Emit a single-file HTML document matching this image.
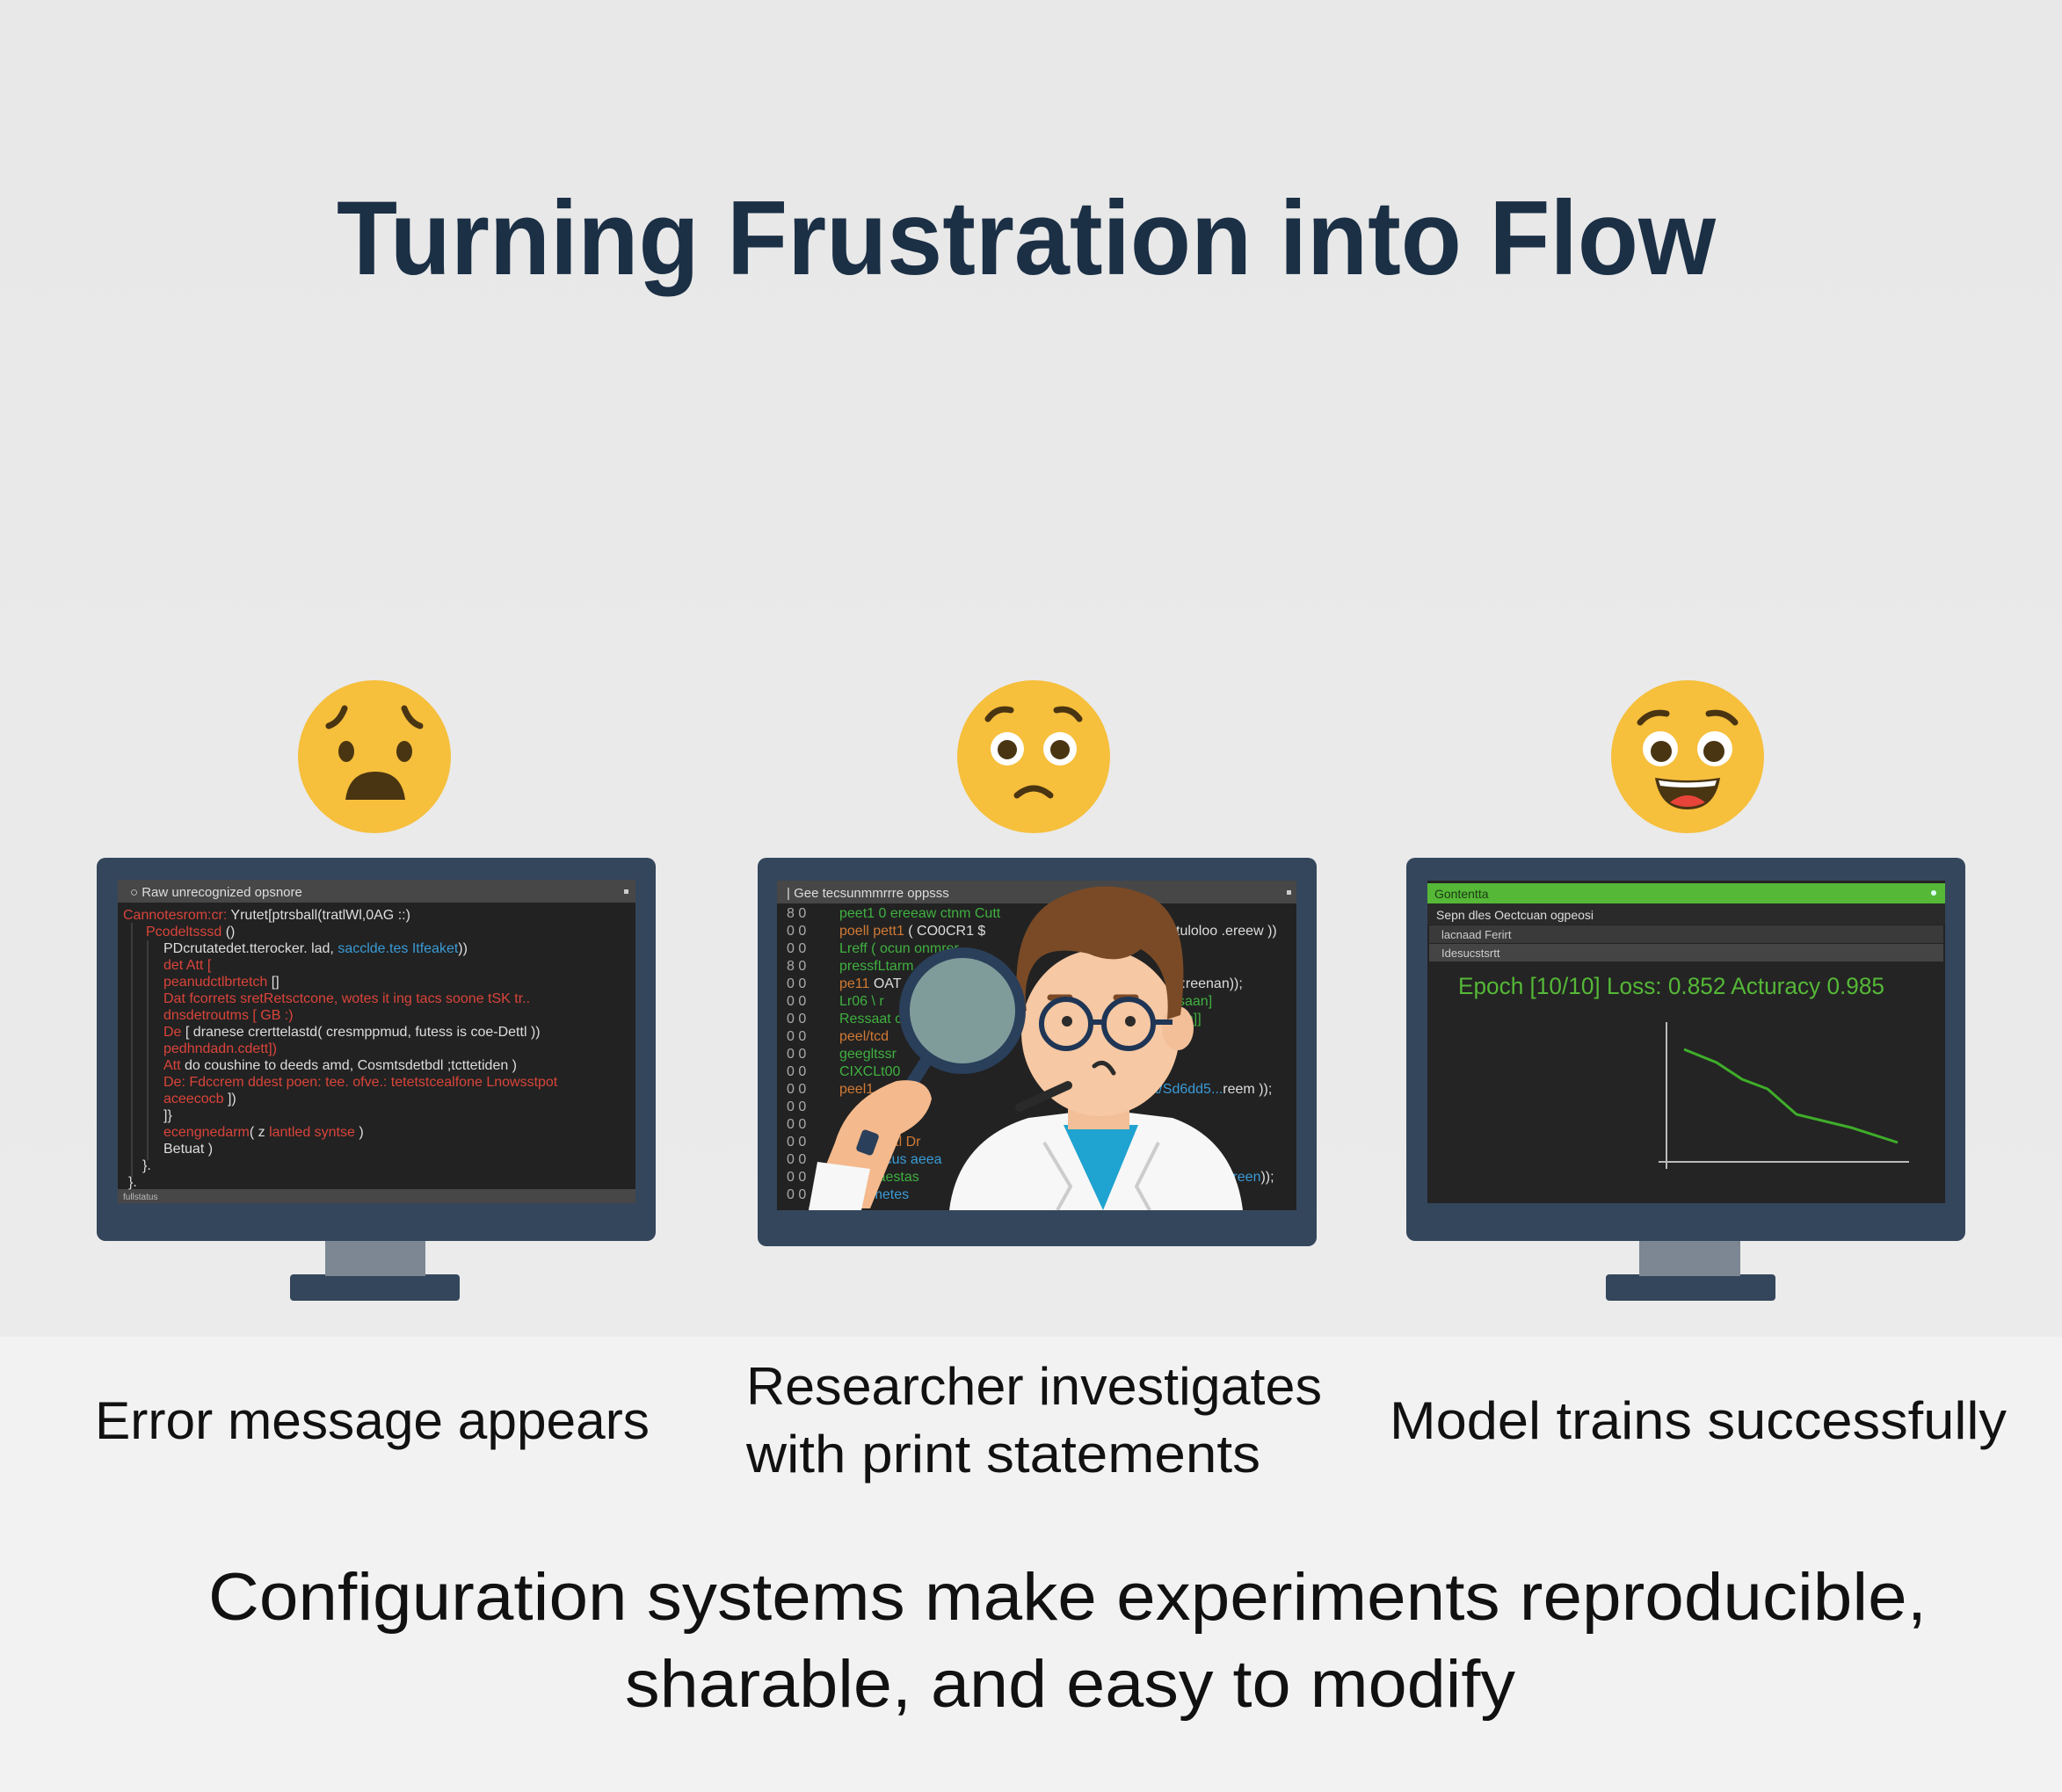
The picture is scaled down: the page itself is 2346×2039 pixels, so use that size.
<!DOCTYPE html>
<html><head><meta charset="utf-8"><style>
html,body{margin:0;padding:0;background:#ececec;}
svg{display:block}
text{font-family:"Liberation Sans",sans-serif}
.m{font-family:"Liberation Mono",monospace;font-size:16px}
</style></head><body>
<svg width="2346" height="2039" viewBox="0 0 2346 2039" xmlns="http://www.w3.org/2000/svg">
<defs>
<linearGradient id="bg" x1="0" y1="0" x2="0" y2="1"><stop offset="0" stop-color="#e8e8e8"/><stop offset="1" stop-color="#ebebeb"/></linearGradient>
<clipPath id="s2"><rect x="884" y="1002" width="591" height="375"/></clipPath>
</defs>
<rect width="2346" height="1521" fill="url(#bg)"/>
<rect y="1521" width="2346" height="518" fill="#f2f2f2"/>

<text x="383" y="312" font-size="120" font-weight="bold" fill="#1b2f45" textLength="1569" lengthAdjust="spacingAndGlyphs">Turning Frustration into Flow</text>

<!-- Emoji 1 -->
<g>
<circle cx="426" cy="861" r="87" fill="#f6bf3c"/>
<path d="M374 826 q12 -4 18 -20" stroke="#4a3512" stroke-width="7" fill="none" stroke-linecap="round"/>
<path d="M478 826 q-12 -4 -18 -20" stroke="#4a3512" stroke-width="7" fill="none" stroke-linecap="round"/>
<ellipse cx="394" cy="855" rx="9" ry="12" fill="#4a3512"/>
<ellipse cx="460" cy="855" rx="9" ry="12" fill="#4a3512"/>
<path d="M393 910 q4 -32 34 -32 q30 0 34 32 z" fill="#4a3512"/>
</g>
<!-- Emoji 2 -->
<g>
<circle cx="1176" cy="861" r="87" fill="#f6bf3c"/>
<path d="M1124 818 q10 -14 26 -10" stroke="#4a3512" stroke-width="7" fill="none" stroke-linecap="round"/>
<path d="M1228 818 q-10 -14 -26 -10" stroke="#4a3512" stroke-width="7" fill="none" stroke-linecap="round"/>
<circle cx="1146" cy="852" r="19" fill="#fff"/><circle cx="1206" cy="852" r="19" fill="#fff"/>
<circle cx="1146" cy="853" r="11" fill="#4a3512"/><circle cx="1206" cy="853" r="11" fill="#4a3512"/>
<path d="M1157 905 q19 -16 38 0" stroke="#4a3512" stroke-width="7" fill="none" stroke-linecap="round"/>
</g>
<!-- Emoji 3 -->
<g>
<circle cx="1920" cy="861" r="87" fill="#f6bf3c"/>
<path d="M1866 822 q12 -14 30 -10" stroke="#4a3512" stroke-width="7" fill="none" stroke-linecap="round"/>
<path d="M1974 822 q-12 -14 -30 -10" stroke="#4a3512" stroke-width="7" fill="none" stroke-linecap="round"/>
<circle cx="1889" cy="852" r="20" fill="#fff"/><circle cx="1951" cy="852" r="20" fill="#fff"/>
<circle cx="1890" cy="855" r="12" fill="#4a3512"/><circle cx="1950" cy="855" r="12" fill="#4a3512"/>
<path d="M1883 885 q37 6 74 0 q-6 36 -37 36 q-31 0 -37 -36 z" fill="#4a3512"/>
<path d="M1887 888 q33 5 66 0 l-2 6 q-31 4 -62 0 z" fill="#fff"/>
<path d="M1900 913 q20 -16 40 0 q-20 10 -40 0 z" fill="#e8443a"/>
</g>

<!-- Monitor 1 -->
<rect x="330" y="1450" width="193" height="30" rx="4" fill="#34465c"/>
<rect x="370" y="1408" width="114" height="44" fill="#7c8793"/>
<rect x="110" y="976" width="636" height="436" rx="10" fill="#34465c"/>
<rect x="134" y="1001" width="589" height="368" fill="#222"/>
<rect x="134" y="1001" width="589" height="26" fill="#474747"/>
<text x="148" y="1020" font-size="15" fill="#ddd" font-family="Liberation Serif,serif">○  Raw unrecognized opsnore</text>
<rect x="710" y="1012" width="5" height="5" fill="#ccc"/>
<rect x="134" y="1353" width="589" height="16" fill="#474747"/>
<text x="140" y="1365" font-size="10" fill="#bbb">fullstatus</text>
<g class="m">
<text x="140" y="1046" fill="#d9443a">Cannotesrom:cr: <tspan fill="#ddd">Yrutet[ptrsball(tratlWl,0AG ::)</tspan></text>
<text x="166" y="1065" fill="#d9443a">Pcodeltsssd <tspan fill="#ddd">()</tspan></text>
<text x="186" y="1084" fill="#ddd">PDcrutatedet.tterocker. lad, <tspan fill="#3a9bd6">sacclde.tes Itfeaket</tspan>))</text>
<text x="186" y="1103" fill="#d9443a">det Att [</text>
<text x="186" y="1122" fill="#d9443a">peanudctlbrtetch <tspan fill="#ddd">[]</tspan></text>
<text x="186" y="1141" fill="#d9443a">Dat fcorrets sretRetsctcone, wotes it ing tacs soone  tSK tr..</text>
<text x="186" y="1160" fill="#d9443a">dnsdetroutms [ GB :)</text>
<text x="186" y="1179" fill="#d9443a">De <tspan fill="#ddd">[ dranese crerttelastd( cresmppmud, futess is coe-Dettl ))</tspan></text>
<text x="186" y="1198" fill="#d9443a">pedhndadn.cdett])</text>
<text x="186" y="1217" fill="#d9443a">Att  <tspan fill="#ddd">do coushine to deeds amd, Cosmtsdetbdl ;tcttetiden )</tspan></text>
<text x="186" y="1236" fill="#d9443a">De: Fdccrem ddest poen: tee. ofve.: tetetstcealfone Lnowsstpot</text>
<text x="186" y="1255" fill="#d9443a">aceecocb <tspan fill="#ddd">])</tspan></text>
<text x="186" y="1274" fill="#ddd">]}</text>
<text x="186" y="1293" fill="#d9443a">ecengnedarm<tspan fill="#ddd">( z </tspan>lantled  syntse <tspan fill="#ddd">)</tspan></text>
<text x="186" y="1312" fill="#ddd">Betuat )</text>
<text x="162" y="1331" fill="#ddd">}.</text>
<text x="146" y="1350" fill="#ddd">}.</text>
</g>
<path d="M150 1050 V1340 M168 1070 V1320" stroke="#555" stroke-width="1"/>

<!-- Monitor 2 -->
<rect x="862" y="976" width="636" height="442" rx="10" fill="#34465c"/>
<rect x="884" y="1002" width="591" height="375" fill="#222"/>
<g clip-path="url(#s2)">
<rect x="884" y="1002" width="591" height="26" fill="#474747"/>
<text x="895" y="1021" font-size="15" fill="#ddd" font-family="Liberation Serif,serif">|  Gee tecsunmmrrre oppsss</text>
<rect x="1464" y="1013" width="5" height="5" fill="#ccc"/>
<g class="m" fill="#aaa">
<text x="895" y="1044">8  0</text><text x="895" y="1064">0  0</text><text x="895" y="1084">0  0</text><text x="895" y="1104">8  0</text><text x="895" y="1124">0  0</text><text x="895" y="1144">0  0</text><text x="895" y="1164">0  0</text><text x="895" y="1184">0  0</text><text x="895" y="1204">0  0</text><text x="895" y="1224">0  0</text><text x="895" y="1244">0  0</text><text x="895" y="1264">0  0</text><text x="895" y="1284">0  0</text><text x="895" y="1304">0  0</text><text x="895" y="1324">0  0</text><text x="895" y="1344">0  0</text><text x="895" y="1364">0  0</text>
</g>
<g class="m">
<text x="955" y="1044" fill="#3fb040">peet1 0 ereeaw ctnm Cutt</text>
<text x="955" y="1064" fill="#d17a35">poell pett1 <tspan fill="#ddd">( CO0CR1 $</tspan></text>
<text x="955" y="1084" fill="#3fb040">Lreff ( ocun onmrer</text>
<text x="955" y="1104" fill="#3fb040">pressfLtarm</text>
<text x="955" y="1124" fill="#d17a35">pe11 <tspan fill="#ddd">OAT</tspan></text>
<text x="955" y="1144" fill="#3fb040">Lr06 \ r</text>
<text x="955" y="1164" fill="#3fb040">Ressaat cl</text>
<text x="955" y="1184" fill="#d17a35">peel/tcd</text>
<text x="955" y="1204" fill="#3fb040">geegltssr</text>
<text x="955" y="1224" fill="#3fb040">CIXCLt00</text>
<text x="955" y="1244" fill="#d17a35">peel1</text>
<text x="955" y="1304" fill="#d17a35">      syeleceetl Dr</text>
<text x="955" y="1324" fill="#3a9bd6">      ert & tecus aeea</text>
<text x="955" y="1344" fill="#3fb040">      eenecaestas</text>
<text x="955" y="1364" fill="#3a9bd6">      tanvrmetes</text>
<text x="1330" y="1064" fill="#ddd">stuloloo .ereew ))</text>
<text x="1340" y="1124" fill="#ddd">t:reenan));</text>
<text x="1340" y="1144" fill="#3fb040">saan]</text>
<text x="1340" y="1164" fill="#3fb040">nn]]</text>
<text x="1305" y="1244" fill="#3a9bd6">at/Sd6dd5...<tspan fill="#ddd">reem ));</tspan></text>
<text x="1390" y="1344" fill="#3a9bd6">.creen<tspan fill="#ddd">));</tspan></text>
</g>
<!-- researcher -->
<path d="M1080 1377 q10 -80 90 -105 l82 -10 l82 10 q70 25 80 105 z" fill="#f7f7f7"/>
<path d="M1210 1280 l45 97 l40 -97 z" fill="#1fa3d0"/>
<path d="M1188 1300 l30 50 -15 27 M1318 1300 l-25 50 15 27" stroke="#ccc" stroke-width="4" fill="none"/>
<rect x="1215" y="1240" width="70" height="45" fill="#f2bf98"/>
<ellipse cx="1252" cy="1175" rx="90" ry="95" fill="#f6c8a3"/>
<ellipse cx="1340" cy="1170" rx="18" ry="25" fill="#f2bf98"/>
<path d="M1158 1150 q-10 -95 40 -125 q55 -30 110 -5 q50 25 35 135 l-15 5 q5 -60 -30 -80 q-25 20 -60 5 q-45 -10 -60 10 q-15 20 -10 55 z" fill="#7a4a26"/>
<path d="M1195 1135 h22 M1270 1135 h22" stroke="#7a4a26" stroke-width="7" stroke-linecap="round"/>
<circle cx="1213" cy="1165" r="28" fill="none" stroke="#1f3555" stroke-width="6"/>
<circle cx="1284" cy="1165" r="28" fill="none" stroke="#1f3555" stroke-width="6"/>
<path d="M1241 1163 h15 M1312 1163 h22" stroke="#1f3555" stroke-width="6"/>
<circle cx="1214" cy="1162" r="6" fill="#2b2b2b"/><circle cx="1286" cy="1162" r="6" fill="#2b2b2b"/>
<path d="M1245 1213 q12 -10 22 8" stroke="#2b2b2b" stroke-width="5" fill="none" stroke-linecap="round"/>
<!-- magnifier -->
<circle cx="1095" cy="1150" r="66" fill="#9fc6c4" fill-opacity="0.75" stroke="#2a3f5a" stroke-width="12"/>
<path d="M1055 1205 l-35 55" stroke="#2a3f5a" stroke-width="14" stroke-linecap="round"/>
<path d="M950 1300 q15 -50 70 -70 q35 -5 40 20 q-5 25 -35 40 l-35 85 h-70 z" fill="#f4b98c"/>
<path d="M930 1322 l60 8 -10 47 h-60 z" fill="#f7f7f7"/>
<rect x="977" y="1287" width="20" height="26" rx="4" fill="#2a3f5a" transform="rotate(20 987 1300)"/>
<path d="M1160 1260 l55 -25" stroke="#2a2a2a" stroke-width="10" stroke-linecap="round"/>
</g>

<!-- Monitor 3 -->
<rect x="1827" y="1450" width="193" height="30" rx="4" fill="#34465c"/>
<rect x="1865" y="1408" width="115" height="44" fill="#7c8793"/>
<rect x="1600" y="976" width="636" height="436" rx="10" fill="#34465c"/>
<rect x="1624" y="1002" width="589" height="367" fill="#242424"/>
<rect x="1624" y="1005" width="589" height="23" fill="#55b837"/>
<text x="1632" y="1022" font-size="14" fill="#1d3b14">Gontentta</text>
<circle cx="2200" cy="1016" r="3" fill="#dff"/>
<rect x="1624" y="1028" width="589" height="24" fill="#2a2a2a"/>
<text x="1634" y="1046" font-size="14" fill="#ddd">Sepn dles Oectcuan ogpeosi</text>
<rect x="1626" y="1053" width="585" height="20" fill="#3a3a3a"/>
<text x="1640" y="1068" font-size="13" fill="#ccc">lacnaad  Ferirt</text>
<rect x="1626" y="1074" width="585" height="20" fill="#444"/>
<text x="1640" y="1089" font-size="13" fill="#ccc">Idesucstsrtt</text>
<text x="1659" y="1131" font-size="27" fill="#55b837" textLength="485" lengthAdjust="spacingAndGlyphs">Epoch [10/10] Loss: 0.852 Acturacy 0.985</text>
<path d="M1896 1163 V1330 M1887 1322 H2172" stroke="#bbb" stroke-width="2"/>
<polyline points="1916,1194 1953,1209 1982,1228 2011,1239 2044,1268 2106,1283 2159,1300" fill="none" stroke="#3fae2a" stroke-width="3"/>

<!-- labels -->
<g fill="#111" font-size="60">
<text x="108" y="1637" textLength="631" lengthAdjust="spacingAndGlyphs">Error message appears</text>
<text x="849" y="1598" textLength="655" lengthAdjust="spacingAndGlyphs">Researcher investigates</text>
<text x="849" y="1675" textLength="585" lengthAdjust="spacingAndGlyphs">with print statements</text>
<text x="1581" y="1637" textLength="702" lengthAdjust="spacingAndGlyphs">Model trains successfully</text>
</g>
<g fill="#111" font-size="76">
<text x="237" y="1843" textLength="1955" lengthAdjust="spacingAndGlyphs">Configuration systems make experiments reproducible,</text>
<text x="711" y="1942" textLength="1013" lengthAdjust="spacingAndGlyphs">sharable, and easy to modify</text>
</g>
</svg>
</body></html>
